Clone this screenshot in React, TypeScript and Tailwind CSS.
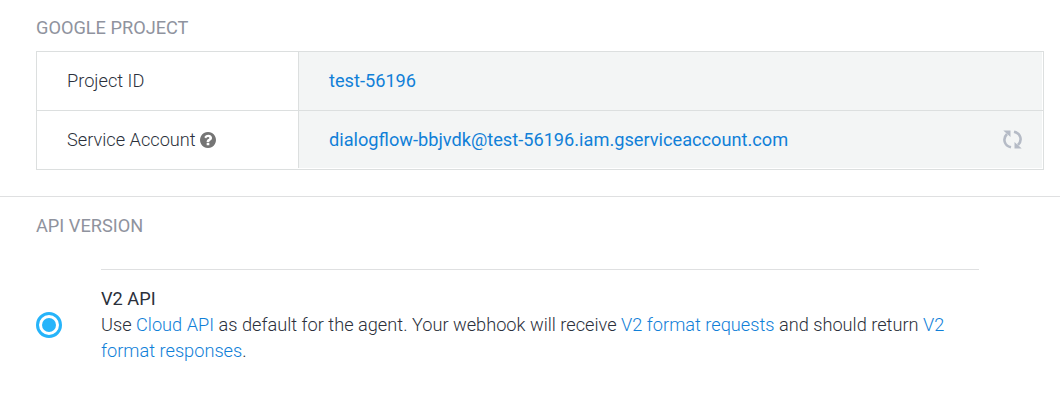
export default function App() {
  return (
    <main className="h-[400px] w-[1060px] overflow-hidden bg-white font-['Roboto',sans-serif] text-[18.2px] leading-[26px] font-light text-[#2b303b]">
      <section className="h-[197px] border-b border-[#dfe0e1] pt-[15px] pl-9">
        <h2 className="font-normal text-[#8f939e]">GOOGLE PROJECT</h2>
        <div className="mt-[10px] w-[1008px] border border-[#dcdfdf]">
          <div className="flex h-[59px] border-b border-[#dcdfdf]">
            <div className="flex w-[262px] items-center border-r border-[#dcdfdf] pl-[30px]">Project ID</div>
            <div className="mr-px flex flex-1 items-center bg-[#f3f5f5] pl-[30px] font-normal text-[#1080d8]">test-56196</div>
          </div>
          <div className="flex h-[58px] pb-px">
            <div className="flex w-[262px] items-center border-r border-[#dcdfdf] pl-[30px]">
              Service Account
              <svg className="ml-[4px] size-4" viewBox="128 128 1536 1536" fill="#757575">
                <path d="M1024 1376v-192q0-14-9-23t-23-9h-192q-14 0-23 9t-9 23v192q0 14 9 23t23 9h192q14 0 23-9t9-23zm256-672q0-88-55.500-163t-138.500-116-170-41q-243 0-371 213-15 24 8 42l132 100q7 6 19 6 16 0 25-12 53-68 86-92 34-24 86-24 48 0 85.500 26t37.500 59q0 38-20 61t-68 45q-63 28-115.500 86.500t-52.500 125.500v36q0 14 9 23t23 9h192q14 0 23-9t9-23q0-19 21.500-49.500t54.500-49.500q32-18 49-28.500t46-35 44.500-48 28-60.500 12.500-81zm384 192q0 209-103 385.500t-279.500 279.500-385.500 103-385.500-103-279.500-279.500-103-385.500 103-385.500 279.500-279.500 385.500-103 385.500 103 279.500 279.500 103 385.500z" />
              </svg>
            </div>
            <div className="mr-px flex flex-1 items-center bg-[#f3f5f5] pl-[30px] font-normal text-[#1080d8]">
              dialogflow-bbjvdk@test-56196.iam.gserviceaccount.com
              <svg className="mr-5 ml-auto h-[19px] w-[19px]" viewBox="0 0 19 19" fill="none" stroke="#b5bbc6" strokeWidth="2.6">
                <path d="M4 4C-.5 8.500 1 15.700 8 17.300" />
                <path d="M15 15C19.500 10.500 18 3.300 11 1.700" />
                <path d="M.3.500H7.500V7ZM18.700 18.500H11.500V12Z" fill="#b5bbc6" stroke="none" />
              </svg>
            </div>
          </div>
        </div>
      </section>
      <section className="pt-4 pl-9">
        <h2 className="font-normal text-[#8f939e]">API VERSION</h2>
        <div className="mt-[30px] flex">
          <div className="mt-[43px] mr-[39px] flex size-[26px] shrink-0 items-center justify-center rounded-full border-3 border-[#26b4fa]">
            <div className="size-[14px] rounded-full bg-[#26b4fa]" />
          </div>
          <div className="w-[878px] border-t border-[#dfe0e1] pt-4">
            <h3 className="font-normal">V2 API</h3>
            <p>
              Use <a className="text-[#1080d8]">Cloud API</a> as default for the agent. Your webhook will receive <a className="text-[#1080d8]">V2 format requests</a> and should return <a className="text-[#1080d8]">V2 format responses</a>.
            </p>
          </div>
        </div>
      </section>
    </main>
  );
}
